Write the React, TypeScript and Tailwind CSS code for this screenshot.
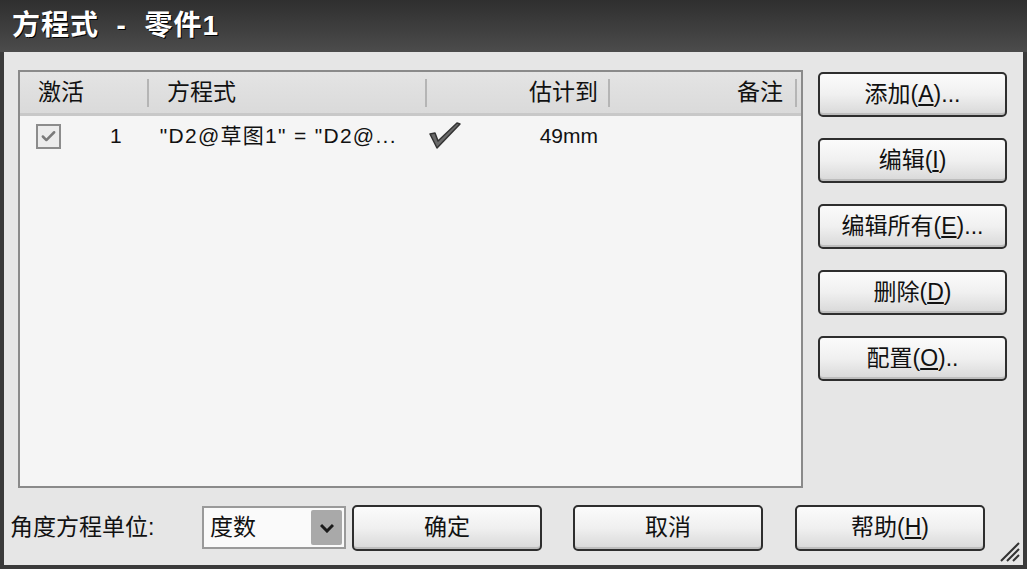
import { Check } from "lucide-react";

const sideButtons = [
  { label: "添加", key: "A", tail: "..." },
  { label: "编辑", key: "I", tail: "" },
  { label: "编辑所有", key: "E", tail: "..." },
  { label: "删除", key: "D", tail: "" },
  { label: "配置", key: "O", tail: ".." },
];

const font = "font-['Liberation_Sans','Noto_Sans_CJK_SC',sans-serif]";

function Btn({ children, className = "" }: { children: React.ReactNode; className?: string }) {
  return (
    <button
      className={`flex items-center justify-center rounded-[5px] border-2 border-[#2e2e2e] bg-gradient-to-b from-[#fbfbfb] via-[#f0f0f0] to-[#d8d8d8] text-[23px] text-[#111] shadow-[inset_0_-2px_0_#bdbdbd] ${className}`}
    >
      {children}
    </button>
  );
}

function Key({ k }: { k: string }) {
  return (
    <>
      (<span className="underline underline-offset-2">{k}</span>)
    </>
  );
}

export default function App() {
  return (
    <div className={`flex h-[569px] w-[1027px] flex-col bg-[#3a3a3a] ${font}`}>
      {/* Title bar */}
      <div className="flex h-[52px] items-center bg-gradient-to-b from-[#2f2f2f] to-[#4c4c4c] pl-[12px]">
        <span className="text-[28px] font-bold tracking-[1px] text-white [text-shadow:1px_1px_0_#000]">
          方程式 &nbsp;- &nbsp;零件1
        </span>
      </div>

      {/* Body */}
      <div className="mx-[4px] mb-[4px] flex flex-1 flex-col bg-[#e6e6e6]">
        <div className="flex flex-1 pl-[14px] pr-[15px] pt-[18px]">
          {/* List */}
          <div className="flex h-[418px] w-[785px] flex-col border-2 border-[#8a8a8a] bg-[#f5f5f5]">
            <div className="flex h-[44px] items-center border-b-[3px] border-[#c8c8c8] bg-gradient-to-b from-[#e4e4e4] to-[#dadada] text-[23px] text-[#111]">
              <div className="flex w-[127px] items-center pl-[18px]">激活</div>
              <div className="h-[28px] w-[2px] bg-[#b5b5b5]" />
              <div className="flex w-[276px] items-center pl-[18px]">方程式</div>
              <div className="h-[28px] w-[2px] bg-[#b5b5b5]" />
              <div className="flex w-[181px] items-center justify-end pr-[10px]">估计到</div>
              <div className="h-[28px] w-[2px] bg-[#b5b5b5]" />
              <div className="flex w-[185px] items-center justify-end pr-[12px]">备注</div>
              <div className="h-[28px] w-[2px] bg-[#b5b5b5]" />
            </div>
            <div className="flex h-[40px] items-center text-[21px] text-[#111]">
              <div className="ml-[16px] flex h-[25px] w-[25px] items-center justify-center border-2 border-[#8c8c8c] bg-[#ececec]">
                <Check size={17} strokeWidth={3.5} className="text-[#7a7a7a]" />
              </div>
              <span className="ml-[49px]">1</span>
              <span className="ml-[38px] w-[268px] whitespace-nowrap tracking-[1.3px]">"D2@草图1" = "D2@...</span>
              <svg width="34" height="30" viewBox="0 0 34 30">
                <path d="M2 13 L9 27 L32 3 L29 2 L10 20 L7 12 Z" fill="#6a6a6a" stroke="#333" strokeWidth="1.5" strokeLinejoin="round" />
              </svg>
              <span className="ml-[78px]">49mm</span>
            </div>
          </div>

          {/* Side buttons */}
          <div className="ml-[15px] flex flex-col gap-[21px] pt-[2px]">
            {sideButtons.map((b) => (
              <Btn key={b.key} className="h-[45px] w-[189px]">
                {b.label}
                <Key k={b.key} />
                {b.tail}
              </Btn>
            ))}
          </div>
        </div>

        {/* Bottom row */}
        <div className="relative flex h-[75px] items-center pl-[6px] text-[23px] text-[#111]">
          <span className="w-[192px] whitespace-nowrap">角度方程单位:</span>
          <div className="flex h-[43px] w-[144px] items-center justify-between border-2 border-[#9a9a9a] bg-[#fafafa] pl-[6px] pr-[2px]">
            <span>度数</span>
            <div className="flex h-[35px] w-[31px] items-center justify-center rounded-[2px] bg-[#a9a9a9]">
              <svg width="14" height="10" viewBox="0 0 14 10">
                <path d="M1 2 L7 8 L13 2" fill="none" stroke="#1a1a1a" strokeWidth="3" />
              </svg>
            </div>
          </div>
          <Btn className="ml-[6px] h-[46px] w-[190px]">确定</Btn>
          <Btn className="ml-[31px] h-[46px] w-[190px]">取消</Btn>
          <Btn className="ml-[32px] h-[46px] w-[190px]">帮助<Key k="H" /></Btn>
          <svg width="24" height="24" viewBox="0 0 24 24" className="absolute bottom-[2px] right-[2px]">
            <path d="M22 4 L4 22 M22 10 L10 22 M22 16 L16 22" stroke="#333" strokeWidth="2" />
          </svg>
        </div>
      </div>
    </div>
  );
}
